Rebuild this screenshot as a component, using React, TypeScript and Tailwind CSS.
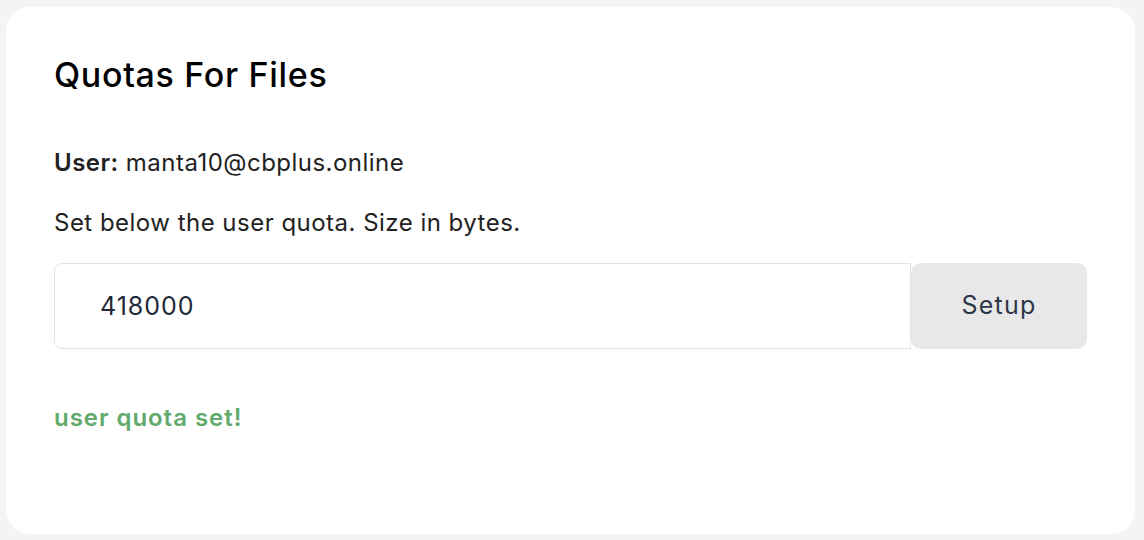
import React from 'react';

export default function App() {
  return (
    <div className="min-h-screen w-full bg-[#f3f4f6] pt-[7px] pl-[6px]" style={{ fontFamily: 'Inter, "Noto Sans", sans-serif' }}>
      <div className="w-[1129px] h-[527px] bg-white rounded-3xl px-12 pt-[49px]">
        <h1 className="text-[34px] leading-[38px] font-medium text-black tracking-[0.02em]">Quotas For Files</h1>

        <p className="mt-[53px] text-[24px] leading-8 text-[#222] tracking-[0.02em]">
          <span className="font-semibold">User:</span> manta10@cbplus.online
        </p>
        <p className="mt-7 text-[24px] leading-8 text-[#222] tracking-[0.02em]">Set below the user quota. Size in bytes.</p>

        <div className="mt-6 flex h-[86px]">
          <input
            type="text"
            defaultValue="418000"
            className="flex-1 h-full border border-[#e2e4e8] rounded-l-lg pl-[45px] text-[25px] tracking-[0.04em] text-[#1f2937] outline-none"
          />
          <button className="w-[176px] h-full bg-[#e8e8e8] rounded-[10px] text-[25px] tracking-[0.05em] text-[#2d3748]">Setup</button>
        </div>

        <p className="mt-[53px] text-[24px] leading-8 font-semibold text-[#62aa6c] tracking-[0.04em]">user quota set!</p>
      </div>
    </div>
  );
}
